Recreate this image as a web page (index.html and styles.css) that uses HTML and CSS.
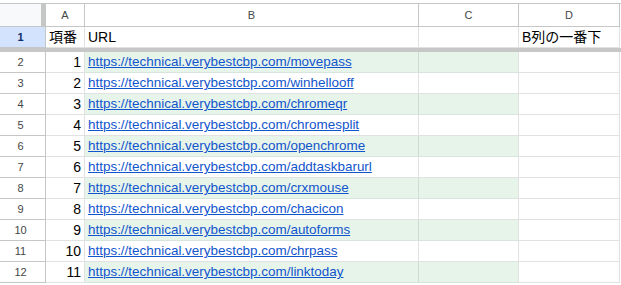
FILE: index.html
```html
<!DOCTYPE html>
<html lang="ja">
<head>
<meta charset="utf-8">
<link rel="stylesheet" href="styles.css">
</head>
<body>
<div class="sheet">
  <div class="row colhead">
    <div class="corner"><span class="freeze-v"></span></div>
    <div class="ch">A</div>
    <div class="ch">B</div>
    <div class="ch">C</div>
    <div class="ch">D</div>
  </div>
  <div class="row r1">
    <div class="rh sel">1</div>
    <div class="c jp">項番</div>
    <div class="c">URL</div>
    <div class="c"></div>
    <div class="c jp">B列の一番下</div>
  </div>
  <div class="freeze-h"></div>
  <div class="row g"><div class="rh">2</div><div class="c num">1</div><div class="c"><a href="#">https://technical.verybestcbp.com/movepass</a></div><div class="c"></div><div class="c"></div></div>
  <div class="row"><div class="rh">3</div><div class="c num">2</div><div class="c"><a href="#">https://technical.verybestcbp.com/winhellooff</a></div><div class="c"></div><div class="c"></div></div>
  <div class="row g"><div class="rh">4</div><div class="c num">3</div><div class="c"><a href="#">https://technical.verybestcbp.com/chromeqr</a></div><div class="c"></div><div class="c"></div></div>
  <div class="row"><div class="rh">5</div><div class="c num">4</div><div class="c"><a href="#">https://technical.verybestcbp.com/chromesplit</a></div><div class="c"></div><div class="c"></div></div>
  <div class="row g"><div class="rh">6</div><div class="c num">5</div><div class="c"><a href="#">https://technical.verybestcbp.com/openchrome</a></div><div class="c"></div><div class="c"></div></div>
  <div class="row"><div class="rh">7</div><div class="c num">6</div><div class="c"><a href="#">https://technical.verybestcbp.com/addtaskbarurl</a></div><div class="c"></div><div class="c"></div></div>
  <div class="row g"><div class="rh">8</div><div class="c num">7</div><div class="c"><a href="#">https://technical.verybestcbp.com/crxmouse</a></div><div class="c"></div><div class="c"></div></div>
  <div class="row"><div class="rh">9</div><div class="c num">8</div><div class="c"><a href="#">https://technical.verybestcbp.com/chacicon</a></div><div class="c"></div><div class="c"></div></div>
  <div class="row g"><div class="rh">10</div><div class="c num">9</div><div class="c"><a href="#">https://technical.verybestcbp.com/autoforms</a></div><div class="c"></div><div class="c"></div></div>
  <div class="row"><div class="rh">11</div><div class="c num">10</div><div class="c"><a href="#">https://technical.verybestcbp.com/chrpass</a></div><div class="c"></div><div class="c"></div></div>
  <div class="row g"><div class="rh">12</div><div class="c num">11</div><div class="c"><a href="#">https://technical.verybestcbp.com/linktoday</a></div><div class="c"></div><div class="c"></div></div>
</div>
</body>
</html>
```
FILE: styles.css
```css
html, body {
  margin: 0;
  padding: 0;
  background: #fff;
}
body {
  font-family: "Liberation Sans", Arial, "Noto Sans CJK JP", sans-serif;
  padding-top: 3px;
  overflow: hidden;
}
.sheet {
  width: 621px;
  border-top: 1px solid #c4c7c5;
}
.row {
  display: grid;
  grid-template-columns: 46px 39px 334px 100px 101px;
  height: 21px;
}
.row > div {
  box-sizing: border-box;
  border-right: 1px solid #e1e1e1;
  border-bottom: 1px solid #e1e1e1;
  overflow: hidden;
  white-space: nowrap;
}
.colhead {
  height: 23px;
}
.colhead > div {
  border-right: 1px solid #c4c7c5;
  border-bottom: 1px solid #c4c7c5;
}
.corner {
  background: #f8f9fa;
  position: relative;
}
.freeze-v {
  position: absolute;
  right: 0;
  top: -4px;
  width: 4px;
  height: 27px;
  background: #c4c7c5;
}
.ch {
  font-size: 11px;
  color: #444746;
  text-align: center;
  line-height: 22px;
  background: #fff;
}
.rh {
  font-size: 11px;
  color: #444746;
  text-align: center;
  line-height: 20px;
  padding-right: 4px;
  border-right-color: #c4c7c5 !important;
  border-bottom-color: #c4c7c5 !important;
}
.rh.sel {
  background: #d3e3fd;
  color: #0b2e6b;
  font-weight: bold;
}
.c {
  font-size: 13.45px;
  line-height: 20px;
  color: #000;
  padding: 0 3px;
}
.c.jp {
  font-family: "Liberation Sans", "Noto Sans CJK JP", sans-serif;
}
.c.num {
  text-align: right;
  font-size: 14px;
}
.r1 .c {
  font-size: 14px;
}
.freeze-h {
  height: 4px;
  background: #c7c7c7;
}
.g > div:nth-child(3),
.g > div:nth-child(4) {
  background: #e6f4ea;
  border-bottom-color: #d7e6dc;
}
.g > div:nth-child(3) {
  border-right-color: #cfdcd3;
}
a {
  color: #1155cc;
  text-decoration: underline;
  font-size: 13.45px;
}
```
